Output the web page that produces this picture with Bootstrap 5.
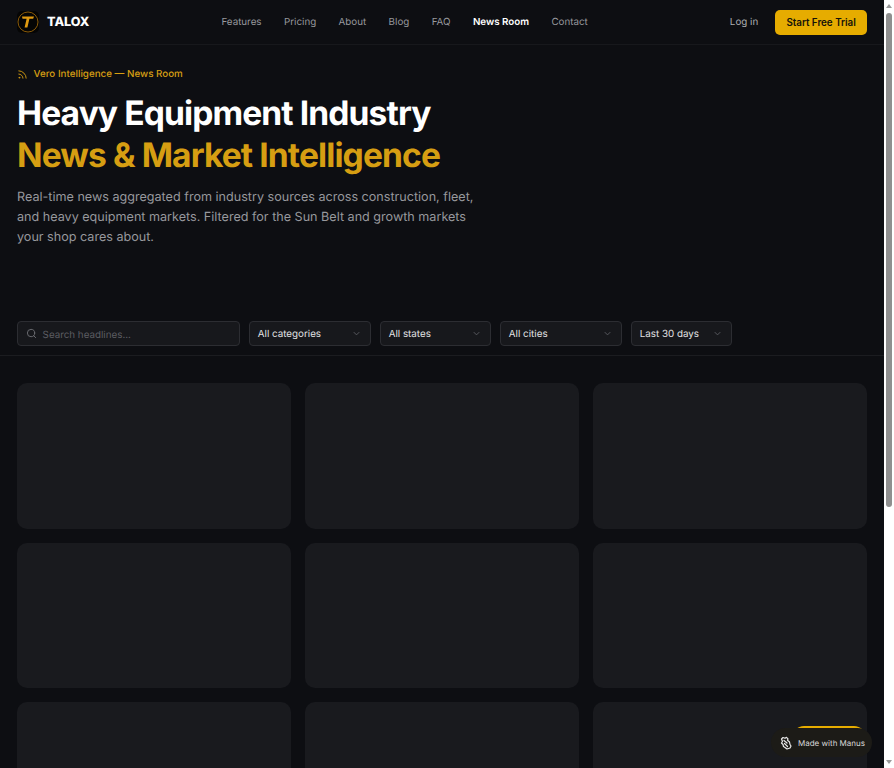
<!DOCTYPE html>
<html lang="en">
<head>
  <meta charset="UTF-8">
  <title>News Room | TALOX</title>
  <link href="https://cdn.jsdelivr.net/npm/bootstrap@5.3.3/dist/css/bootstrap.min.css" rel="stylesheet">
  <style>
    html { overflow: hidden; height: 768px; }
    body { background: #0d0e12; font-family: Inter, "Liberation Sans", sans-serif; color: #fff; text-rendering: geometricPrecision; margin-right: 10px; }
    .top-bar { height: 45px; padding: 0 17px; background: #0d0e12; border-bottom: 1px solid #17181c; }
    .brand-name { font-size: 12.6px; font-weight: 800; color: #fff; line-height: 25px; }
    .nav-items { gap: 22.4px; margin-left: -10px; }
    .nav-items a { font-size: 9.8px; color: #97989d; text-decoration: none; font-weight: 400; line-height: 25px; }
    .nav-items a.on { color: #fff; font-weight: 600; }
    .login-link { font-size: 9.8px; color: #aeafb3; text-decoration: none; font-weight: 400; line-height: 25px; }
    .trial-btn { background: #e6ac00; border: 0; color: #14120a; font-size: 9.8px; font-weight: 600; height: 25px; padding: 0 11.2px; border-radius: 5px; line-height: 25px; }
    .hero { padding: 23px 17px 0; height: 265px; }
    .eyebrow { font-size: 9.8px; font-weight: 500; color: #d69e12; gap: 5.6px; height: 13px; line-height: 17px; }
    .eyebrow svg { margin-top: -1px; }
    .hero h1 { margin: 12px 0 0; font-size: 33.6px; line-height: 42px; font-weight: 700; letter-spacing: -.9px; color: #fff; }
    .hero h1 span { color: #d69e12; display: block; }
    .hero p { margin: 11.4px 0 0; width: 470.4px; font-size: 12.6px; line-height: 19.6px; color: #97989d; }
    .filter-bar { padding: 11px 17px 9px; gap: 8.4px; border-bottom: 1px solid #1b1c20; }
    .search-box { width: 223.4px; height: 25px; background: #17181c; border: 1px solid #2c2d32; border-radius: 4px; padding: 0 8px; gap: 5.6px; font-size: 9.8px; color: #5c5d62; line-height: 18px; }
    .search-box span { padding-top: 4px; }
    .pick-box { height: 25px; background: #17181c; border: 1px solid #2c2d32; border-radius: 4px; padding: 0 8px; font-size: 9.8px; color: #e2e2e4; line-height: 18px; }
    .pick-box span { padding-top: 3px; }
    .pick-box svg { margin-top: -1px; }
    .card-grid { display: grid; grid-template-columns: repeat(3, 274px); gap: 14px; padding: 27.2px 17px 28px; }
    .blank-card { height: 145.6px; background: #191a1e; border-radius: 10px; }
    .manus-wrap { position: fixed; left: 771px; top: 728px; width: 101px; z-index: 5; }
    .gold-strip { position: absolute; top: -2px; left: 21px; width: 74px; height: 12px; background: #e6ac00; border-radius: 12px 12px 0 0; }
    .manus-pill { position: relative; height: 29px; padding: 0 8px 0 9px; gap: 6px; background: #1c1b17; border-radius: 15px; font-size: 8px; color: #d8d8d8; white-space: nowrap; line-height: 16px; }
    .manus-pill span { padding-top: 1px; }
    .fake-scroll { position: fixed; top: 0; right: 0; width: 10px; height: 768px; background: #fff; z-index: 9; }
    .fake-thumb { position: absolute; top: 13px; left: 2px; width: 6px; height: 494px; background: #8f8f8f; border-radius: 3px; }
    .fake-arrow { position: absolute; left: 2px; width: 0; height: 0; border-left: 3px solid transparent; border-right: 3px solid transparent; }
  </style>
</head>
<body>
  <nav class="top-bar d-flex align-items-center justify-content-between">
    <a href="#" class="d-flex align-items-center gap-2 text-decoration-none">
      <svg width="22" height="22" viewBox="0 0 22 22">
        <rect width="22" height="22" rx="5" fill="#050505"/>
        <circle cx="11" cy="11" r="10" fill="none" stroke="#8a5a08" stroke-width="1"/>
        <path d="M5 5.500h12l-.8 2.300h-3.800l-2 8.700H7.600l2-8.700H5.500z" fill="#e09a10"/>
      </svg>
      <span class="brand-name">TALOX</span>
    </a>
    <div class="nav-items d-flex align-items-center">
      <a href="#">Features</a>
      <a href="#">Pricing</a>
      <a href="#">About</a>
      <a href="#">Blog</a>
      <a href="#">FAQ</a>
      <a href="#" class="on">News Room</a>
      <a href="#">Contact</a>
    </div>
    <div class="d-flex align-items-center" style="gap:17px">
      <a href="#" class="login-link">Log in</a>
      <button class="trial-btn">Start Free Trial</button>
    </div>
  </nav>

  <section class="hero">
    <div class="eyebrow d-flex align-items-center">
      <svg width="11" height="11" viewBox="0 0 24 24" fill="none" stroke="#d69e12" stroke-width="2" stroke-linecap="round"><path d="M4 11a9 9 0 0 1 9 9"/><path d="M4 4a16 16 0 0 1 16 16"/><circle cx="5" cy="19" r="1"/></svg>
      <span>Vero Intelligence — News Room</span>
    </div>
    <h1>Heavy Equipment Industry <span>News &amp; Market Intelligence</span></h1>
    <p>Real-time news aggregated from industry sources across construction, fleet, and heavy equipment markets. Filtered for the Sun Belt and growth markets your shop cares about.</p>
  </section>

  <div class="filter-bar d-flex align-items-center">
    <div class="search-box d-flex align-items-center">
      <svg width="11" height="11" viewBox="0 0 24 24" fill="none" stroke="#6f7075" stroke-width="2" stroke-linecap="round"><circle cx="11" cy="11" r="8"/><path d="m21 21-4.300-4.300"/></svg>
      <span>Search headlines...</span>
    </div>
    <div class="pick-box d-flex align-items-center justify-content-between" style="width:122.5px"><span>All categories</span><svg width="11" height="11" viewBox="0 0 24 24" fill="none" stroke="#5c5d62" stroke-width="2"><path d="m6 9 6 6 6-6"/></svg></div>
    <div class="pick-box d-flex align-items-center justify-content-between" style="width:111.8px"><span>All states</span><svg width="11" height="11" viewBox="0 0 24 24" fill="none" stroke="#5c5d62" stroke-width="2"><path d="m6 9 6 6 6-6"/></svg></div>
    <div class="pick-box d-flex align-items-center justify-content-between" style="width:122.5px"><span>All cities</span><svg width="11" height="11" viewBox="0 0 24 24" fill="none" stroke="#5c5d62" stroke-width="2"><path d="m6 9 6 6 6-6"/></svg></div>
    <div class="pick-box d-flex align-items-center justify-content-between" style="width:101px"><span>Last 30 days</span><svg width="11" height="11" viewBox="0 0 24 24" fill="none" stroke="#5c5d62" stroke-width="2"><path d="m6 9 6 6 6-6"/></svg></div>
  </div>

  <div class="card-grid">
    <div class="blank-card"></div><div class="blank-card"></div><div class="blank-card"></div>
    <div class="blank-card"></div><div class="blank-card"></div><div class="blank-card"></div>
    <div class="blank-card"></div><div class="blank-card"></div><div class="blank-card"></div>
  </div>

  <div class="manus-wrap">
    <div class="gold-strip"></div>
    <div class="manus-pill d-flex align-items-center">
      <svg class="flex-shrink-0" width="12" height="14" viewBox="0 0 12 14" fill="none" stroke="#e8e8e8" stroke-width="1.200" stroke-linecap="round" stroke-linejoin="round"><path d="M1.500 3 3 1.500l2 .8 1.500-1 1.500 1.500-.5 1.500L9.500 6l.5 2.500L11 10l-1 2-1.500.5L7 13l-2-1.500-1.500-1-.5-2L1.500 7l1-1.500z"/><path d="M4 4.500 7 7M4.500 7.500 7.500 10.500"/></svg>
      <span>Made with Manus</span>
    </div>
  </div>

  <div class="fake-scroll">
    <div class="fake-arrow" style="top:4px;border-bottom:4px solid #9a9a9a"></div>
    <div class="fake-thumb"></div>
    <div class="fake-arrow" style="bottom:4px;border-top:4px solid #9a9a9a"></div>
  </div>
</body>
</html>
